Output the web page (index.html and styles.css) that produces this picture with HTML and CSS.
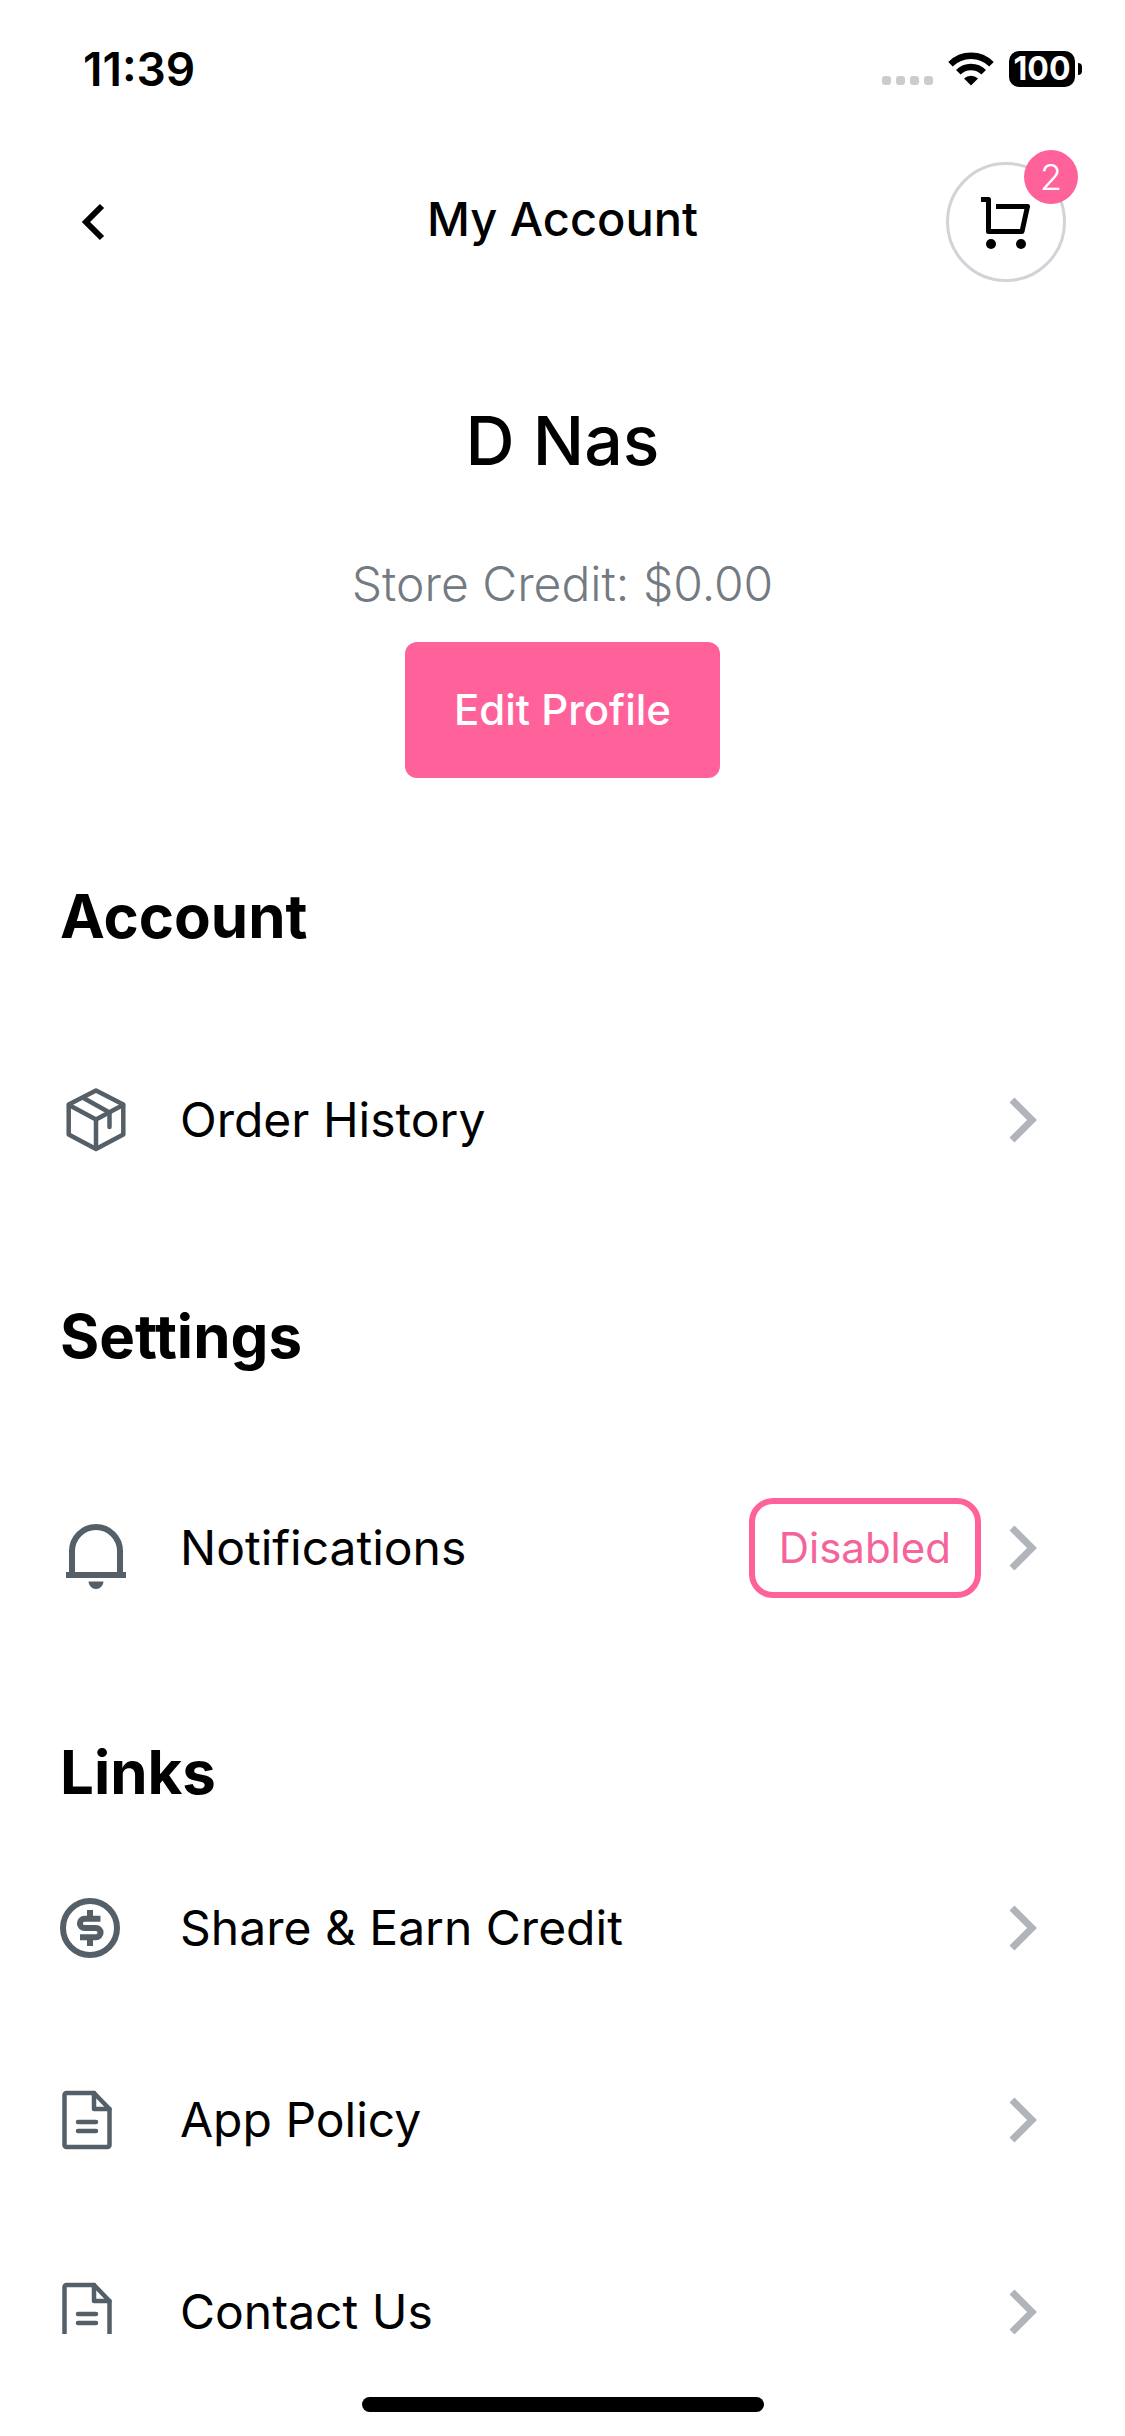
FILE: index.html
```html
<!DOCTYPE html>
<html lang="en">
<head>
    <meta charset="UTF-8">
    <meta name="viewport" content="width=device-width, initial-scale=1.0">
    <title>My Account</title>
    <link rel="stylesheet" href="styles.css">
</head>
<body>
    <!-- Shared icons -->
    <svg class="sprite" aria-hidden="true">
        <symbol id="chevron" viewBox="0 0 36 48">
            <path d="M7 4L27 24L7 44" fill="none" stroke="#b1b4bb" stroke-width="7"/>
        </symbol>
        <symbol id="document" viewBox="0 0 72 72">
            <g fill="none" stroke="#555f67" stroke-width="4.5" stroke-linejoin="round" stroke-linecap="round">
                <path d="M6.5 9H34L49.5 25V61a2 2 0 0 1-2 2H6.500a2 2 0 0 1-2-2V11a2 2 0 0 1 2-2z"/>
                <path d="M34 9V25H49.500"/>
                <path d="M18 38H36M18 47H36"/>
            </g>
        </symbol>
    </svg>

    <div class="status-bar">
        <span class="time">11:39</span>
        <div class="status-icons">
            <svg class="signal" viewBox="0 0 51 36" fill="#ccc">
                <rect x="0" y="25" width="9" height="9" rx="3"/>
                <rect x="14" y="25" width="9" height="9" rx="3"/>
                <rect x="28" y="25" width="9" height="9" rx="3"/>
                <rect x="42" y="25" width="9" height="9" rx="3"/>
            </svg>
            <svg class="wifi" viewBox="0 0 46 36">
                <g fill="none" stroke="#000" stroke-width="6.400">
                    <path d="M2.500 13.300a29 29 0 0 1 41 0"/>
                    <path d="M10.300 21.200a18 18 0 0 1 25.400 0"/>
                </g>
                <path d="M23 34.500L16 27.500a10 10 0 0 1 14 0z"/>
            </svg>
            <div class="battery">
                <span class="battery-level">100</span>
                <span class="battery-tip"></span>
            </div>
        </div>
    </div>

    <header class="header">
        <button class="back" aria-label="Back">
            <svg viewBox="0 0 60 60"><path d="M43 14L27 30L43 46" fill="none" stroke="#000" stroke-width="6"/></svg>
        </button>
        <h1>My Account</h1>
        <button class="cart" aria-label="Cart">
            <svg viewBox="0 0 60 60">
                <path d="M5 7.500H12.500V39.500H46L51.500 14.500H20" fill="none" stroke="#000" stroke-width="5" stroke-linejoin="round"/>
                <circle cx="15" cy="52" r="5"/>
                <circle cx="45" cy="52" r="5"/>
            </svg>
            <span class="badge">2</span>
        </button>
    </header>

    <main>
        <div class="profile">
            <h2 class="name">D Nas</h2>
            <p class="credit">Store Credit: $0.00</p>
            <button class="edit">Edit Profile</button>
        </div>

        <section>
            <h2 class="section-title">Account</h2>
            <a class="row" href="#">
                <svg class="icon" viewBox="0 0 72 72">
                    <g fill="none" stroke="#555f67" stroke-width="4.500" stroke-linejoin="round" stroke-linecap="round">
                        <path d="M36 6.500L63.300 20.500V50.500L36 65L8.700 50.500V20.500z"/>
                        <path d="M9 21L36 35.500L63 21M36 35.500V64"/>
                        <path d="M23.500 14L49.500 28.500V43"/>
                    </g>
                </svg>
                <span class="label">Order History</span>
                <svg class="arrow"><use href="#chevron"/></svg>
            </a>
        </section>

        <section>
            <h2 class="section-title">Settings</h2>
            <a class="row" href="#">
                <svg class="icon" viewBox="0 0 72 72">
                    <path d="M12 61V39a24 24 0 0 1 48 0V61" fill="none" stroke="#555f67" stroke-width="6"/>
                    <path d="M6 60H66V66H6zM28.500 69.500h15a7.500 7.500 0 0 1-15 0z" fill="#555f67"/>
                </svg>
                <span class="label">Notifications</span>
                <span class="pill">Disabled</span>
                <svg class="arrow"><use href="#chevron"/></svg>
            </a>
        </section>

        <section class="links">
            <h2 class="section-title">Links</h2>
            <a class="row" href="#">
                <svg class="icon" viewBox="0 0 72 72">
                    <g fill="none" stroke="#555f67" stroke-width="6">
                        <circle cx="30" cy="36" r="27"/>
                        <path d="M40.500 26.800H24.500a4.600 4.600 0 0 0 0 9.200H36a4.600 4.600 0 0 1 0 9.200H20M30 18V25M30 47V54"/>
                    </g>
                </svg>
                <span class="label">Share &amp; Earn Credit</span>
                <svg class="arrow"><use href="#chevron"/></svg>
            </a>
            <a class="row" href="#">
                <svg class="icon"><use href="#document"/></svg>
                <span class="label">App Policy</span>
                <svg class="arrow"><use href="#chevron"/></svg>
            </a>
            <a class="row" href="#">
                <svg class="icon"><use href="#document"/></svg>
                <span class="label">Contact Us</span>
                <svg class="arrow"><use href="#chevron"/></svg>
            </a>
        </section>
    </main>

    <footer class="home-bar"><span class="home-indicator"></span></footer>
</body>
</html>
```
FILE: styles.css
```css
* {
    box-sizing: border-box;
}
body {
    margin: 0;
    height: 100vh;
    display: flex;
    flex-direction: column;
    background: #fff;
    color: #000;
    font-family: Inter, "Liberation Sans", sans-serif;
    font-size: 48px;
}
h1, h2, p {
    margin: 0;
}
button {
    border: none;
    padding: 0;
    font-family: inherit;
    cursor: pointer;
}
.sprite {
    position: absolute;
    width: 0;
    height: 0;
}

/* Status bar */
.status-bar {
    flex: none;
    height: 132px;
    padding: 6px 43px 0 83px;
    display: flex;
    align-items: center;
    justify-content: space-between;
}
.time {
    font-size: 46px;
    font-weight: 600;
}
.status-icons {
    display: flex;
    align-items: center;
    gap: 15px;
}
.signal {
    width: 51px;
    height: 36px;
}
.wifi {
    width: 46px;
    height: 36px;
}
.battery {
    display: flex;
    align-items: center;
    gap: 3px;
}
.battery-level {
    width: 66px;
    border-radius: 10px;
    background: #000;
    color: #fff;
    font-size: 32px;
    font-weight: 700;
    line-height: 36px;
    text-align: center;
}
.battery-tip {
    width: 4px;
    height: 12px;
    border-radius: 0 4px 4px 0;
    background: #000;
}

/* Header */
.header {
    flex: none;
    height: 180px;
    padding: 0 59px;
    display: grid;
    grid-template-columns: 1fr auto 1fr;
    align-items: center;
}
.header h1 {
    padding-bottom: 8px;
    font-size: 47px;
    font-weight: 500;
}
.back {
    width: 60px;
    height: 60px;
    background: none;
}
.back svg {
    display: block;
}
.cart {
    position: relative;
    justify-self: end;
    display: flex;
    align-items: center;
    justify-content: center;
    width: 120px;
    height: 120px;
    border: 3px solid #d1d3d8;
    border-radius: 50%;
    background: #fff;
}
.cart svg {
    width: 60px;
    height: 60px;
}
.badge {
    position: absolute;
    top: -15px;
    right: -15px;
    width: 54px;
    border-radius: 50%;
    background: #ff629a;
    color: #fff;
    font-size: 36px;
    font-weight: 300;
    line-height: 54px;
    text-align: center;
}

main {
    flex: 1;
    min-height: 0;
    overflow: hidden;
}

/* Profile */
.profile {
    display: flex;
    flex-direction: column;
    align-items: center;
    padding: 80px 60px 97px;
}
.name {
    font-size: 68px;
    font-weight: 500;
    line-height: 96px;
}
.credit {
    margin-top: 64px;
    color: #747a81;
    font-weight: 300;
    line-height: 64px;
}
.edit {
    margin-top: 26px;
    padding: 0 49px;
    border-radius: 12px;
    background: #ff629a;
    color: #fff;
    font-size: 42px;
    font-weight: 500;
    line-height: 136px;
}

/* Sections */
section {
    margin-bottom: 79px;
}
.section-title {
    margin-bottom: 67px;
    padding: 0 60px;
    font-size: 60px;
    font-weight: 700;
    line-height: 82px;
}
.links .section-title {
    margin-bottom: 19px;
}
.row {
    display: flex;
    align-items: center;
    min-height: 192px;
    padding: 54px 84px 54px 60px;
    color: inherit;
    text-decoration: none;
}
.icon {
    flex: none;
    width: 72px;
    height: 72px;
    margin-right: 48px;
    overflow: visible;
}
.label {
    flex: 1;
    line-height: 44px;
}
.pill {
    padding: 0 24px;
    border: 6px solid #ff629a;
    border-radius: 24px;
    color: #f4649a;
    font-size: 42px;
    line-height: 88px;
}
.arrow {
    flex: none;
    width: 36px;
    height: 48px;
    margin-left: 24px;
}

/* Home indicator */
.home-bar {
    flex: none;
    display: flex;
    justify-content: center;
    align-items: flex-end;
    height: 102px;
    padding-bottom: 24px;
}
.home-indicator {
    width: 402px;
    height: 15px;
    border-radius: 8px;
    background: #000;
}
```
